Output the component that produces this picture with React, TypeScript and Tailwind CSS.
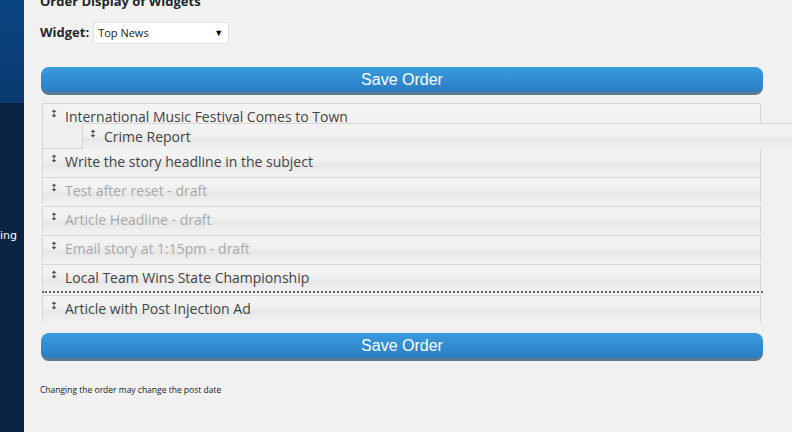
import React from 'react';

const Handle: React.FC = () => (
    <svg width="6" height="9" viewBox="0 0 6 9" className="shrink-0 text-[#555]">
        <path d="M3 0.5 L5.5 3 H0.5 Z M3 8.5 L5.5 6 H0.5 Z" fill="currentColor" />
        <rect x="2.5" y="2.5" width="1" height="4" fill="currentColor" />
    </svg>
);

type Item = { title: string; draft?: boolean };

const items: Item[] = [
    { title: 'Write the story headline in the subject' },
    { title: 'Test after reset - draft', draft: true },
    { title: 'Article Headline - draft', draft: true },
    { title: 'Email story at 1:15pm - draft', draft: true },
    { title: 'Local Team Wins State Championship' },
];

const rowBg = 'bg-[linear-gradient(to_bottom,#f3f3f3_0%,#f1f1f1_40%,#e7e7e7_62%,#ececec_80%,#f1f1f1_100%)]';

const Row: React.FC<{ item: Item; className?: string }> = ({ item, className = '' }) => (
    <div className={`h-[27px] flex items-start gap-[8px] pl-[8px] pt-[4px] border border-[#d6d6d6] border-b-0 ${rowBg} ${className}`}>
        <div className="pt-[1px]"><Handle /></div>
        <span className={`text-[14px] leading-[18px] ${item.draft ? 'text-[#a8a8a8]' : 'text-[#444]'}`}>{item.title}</span>
    </div>
);

const SaveButton: React.FC = () => (
    <button className="w-[722px] h-[28px] rounded-[8px] bg-[linear-gradient(to_bottom,#3a9be0,#2a7dc0)] border-b-[3px] border-[#5f7a8f] text-white text-[16px] font-['Liberation_Sans',Arial,sans-serif] leading-[25px]">
        Save Order
    </button>
);

export default function App() {
    return (
        <div className="w-[792px] h-[432px] overflow-hidden flex bg-[#f1f1f1] font-['Open_Sans','Noto_Sans',sans-serif]">
            {/* sidebar */}
            <div className="w-[24px] shrink-0 flex flex-col">
                <div className="h-[103px] bg-[linear-gradient(to_bottom,#0b4581,#093a70)]" />
                <div className="flex-1 bg-[#0b2343] relative">
                    <span className="absolute left-0 top-[125px] text-white text-[11px] font-['DejaVu_Sans',sans-serif]">ing</span>
                </div>
            </div>

            <div className="flex-1 relative pl-[16px] pt-0">
                <h2 className="-mt-[9px] text-[13px] font-bold text-[#23282d] leading-[20px]">Order Display of Widgets</h2>
                <div className="mt-[11px] flex items-center gap-[4px]">
                    <span className="text-[13px] font-bold text-[#23282d]">Widget:</span>
                    <div className="w-[136px] h-[22px] bg-white border border-[#e3e3e3] flex items-center justify-between pl-[4px] pr-[5px]">
                        <span className="text-[11px] text-[#222]">Top News</span>
                        <span className="text-[9px] text-black">▼</span>
                    </div>
                </div>

                <div className="mt-[23px] pl-[1px]"><SaveButton /></div>

                <div className="mt-[8px] ml-[2px] w-[719px]">
                    {/* first item with nested placeholder */}
                    <div className={`h-[45px] border border-[#d6d6d6] border-b-0 ${rowBg}`}>
                        <div className="flex items-start gap-[8px] pl-[8px] pt-[4px] h-[20px]">
                            <div className="pt-[1px]"><Handle /></div>
                            <span className="text-[14px] leading-[18px] text-[#444]">International Music Festival Comes to Town</span>
                        </div>
                        <div className="w-[41px] h-[25px] border-b border-[#d6d6d6] bg-[#efefef]" />
                    </div>
                    {items.map((it, i) => (
                        <Row key={it.title} item={it} className={i === 0 ? '' : 'mt-[2px]'} />
                    ))}
                    <div className="border-t-2 border-dotted border-[#666] w-[721px]" />
                    <Row item={{ title: 'Article with Post Injection Ad' }} className="mt-[2px]" />
                </div>

                {/* dragged helper */}
                <div className={`absolute left-[58px] top-[123px] w-[720px] h-[26px] flex items-start gap-[8px] pl-[7px] pt-[4px] border-t border-l border-[#d6d6d6] ${rowBg}`}>
                    <div className="pt-[1px]"><Handle /></div>
                    <span className="text-[14px] leading-[18px] text-[#444]">Crime Report</span>
                </div>

                <div className="mt-[11px] pl-[1px]"><SaveButton /></div>

                <p className="mt-[23px] text-[8.5px] text-[#222]">Changing the order may change the post date</p>
            </div>
        </div>
    );
}
